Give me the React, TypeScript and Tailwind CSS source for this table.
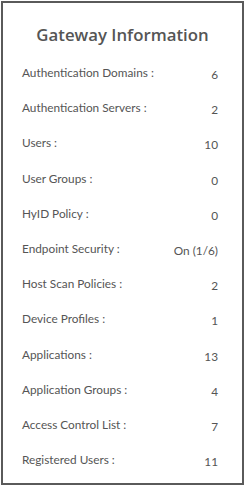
import React from "react";

const rows: [string, string][] = [
  ["Authentication Domains :", "6"],
  ["Authentication Servers :", "2"],
  ["Users :", "10"],
  ["User Groups :", "0"],
  ["HyID Policy :", "0"],
  ["Endpoint Security :", "On (1/6)"],
  ["Host Scan Policies :", "2"],
  ["Device Profiles :", "1"],
  ["Applications :", "13"],
  ["Application Groups :", "4"],
  ["Access Control List :", "7"],
  ["Registered Users :", "11"],
];

export default function App() {
  return (
    <div className="h-[487px] w-[246px] bg-white p-px font-['Lato',sans-serif]">
      <div className="flex h-[484px] w-[243px] flex-col border-2 border-[#5a5a5a] bg-white">
        <h1 className="mt-[19px] text-center font-['Open_Sans',sans-serif] text-[16.8px] font-semibold leading-[26px] text-[#555]">
          Gateway Information
        </h1>
        <div className="mt-[17px] flex flex-col pl-[19px] pr-[24px]">
          {rows.map(([label, value]) => (
            <div
              key={label}
              className="flex h-[35.2px] items-start justify-between text-[11.8px] text-[#555]"
            >
              <span className="leading-[16px]">{label}</span>
              <span className="mt-[2px] leading-[16px]">{value}</span>
            </div>
          ))}
        </div>
      </div>
    </div>
  );
}
